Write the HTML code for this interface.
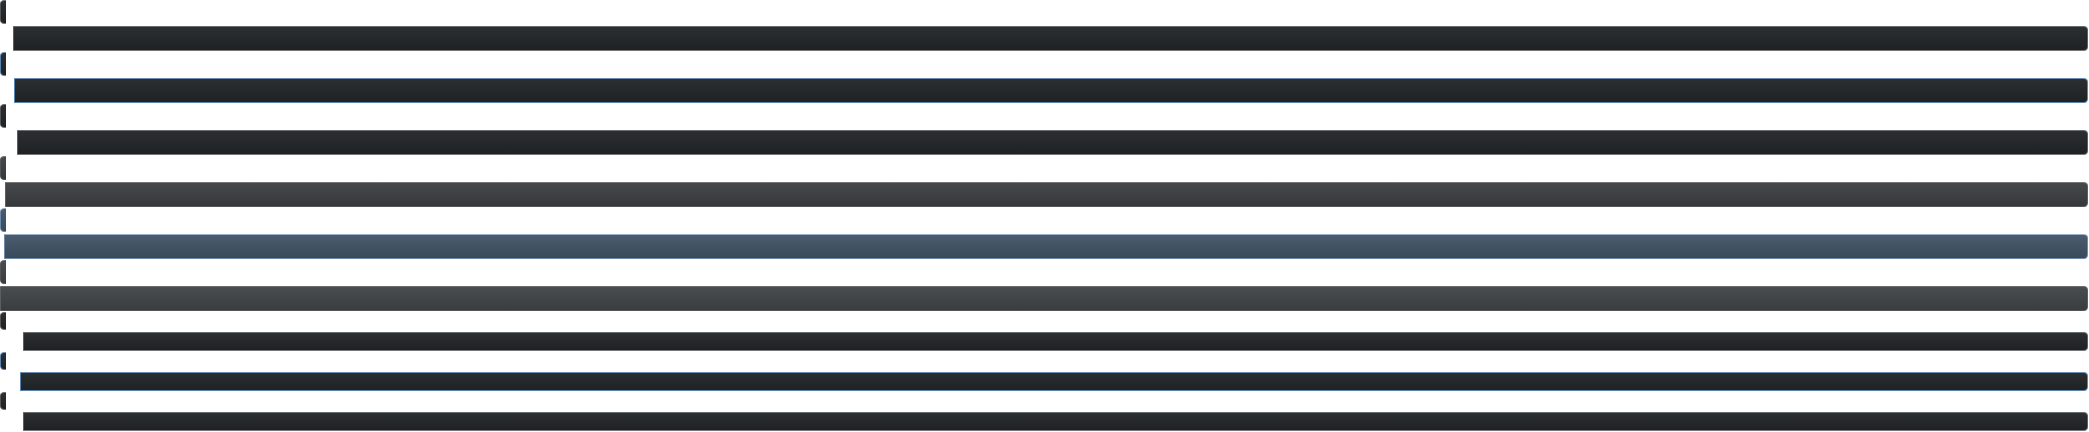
<!DOCTYPE html>
<html><head><style>
html,body{margin:0;padding:0;background:#fff;width:2089px;height:432px;overflow:hidden;position:relative}
div{position:absolute;box-sizing:border-box}
.t{left:0;width:6px;border-radius:4px 0 0 4px;border:1px solid #555;border-right:none}
.b{right:1px;border-radius:0 4px 4px 0;border:1px solid #5c5f62}
.d{background:linear-gradient(#2c2f32,#1f2224);border-top-color:#6a6d70;border-bottom-color:#777}
.db{background:linear-gradient(#2c2f32,#1f2224);border-color:#5a84b0;border-top-color:#6d8db0}
.m{background:linear-gradient(#46494c,#36393c);border-top-color:#777;border-bottom-color:#555}
.mb{background:linear-gradient(#4a5c6e,#3a4a5a);border-color:#6d8aa8;border-top-color:#9ab0c6}
.g{background:linear-gradient(#4a4d50,#3a3d40);border-top-color:#6a6d70;border-bottom-color:#555}
</style></head><body>
<div class="t d" style="top:0;height:24px"></div>
<div class="b d" style="left:13px;top:26px;height:25px"></div>
<div class="t db" style="top:52px;height:24px"></div>
<div class="b db" style="left:14px;top:78px;height:25px"></div>
<div class="t d" style="top:104px;height:24px"></div>
<div class="b d" style="left:17px;top:130px;height:25px"></div>
<div class="t m" style="top:156px;height:24px"></div>
<div class="b m" style="left:5px;top:182px;height:25px"></div>
<div class="t mb" style="top:208px;height:24px"></div>
<div class="b mb" style="left:4px;top:234px;height:25px"></div>
<div class="t g" style="top:260px;height:24px"></div>
<div class="b g" style="left:0;top:286px;height:25px"></div>
<div class="t d" style="top:312px;height:18px"></div>
<div class="b d" style="left:23px;top:332px;height:19px"></div>
<div class="t db" style="top:352px;height:18px"></div>
<div class="b db" style="left:20px;top:372px;height:19px"></div>
<div class="t d" style="top:392px;height:18px"></div>
<div class="b d" style="left:23px;top:412px;height:19px"></div>
</body></html>
